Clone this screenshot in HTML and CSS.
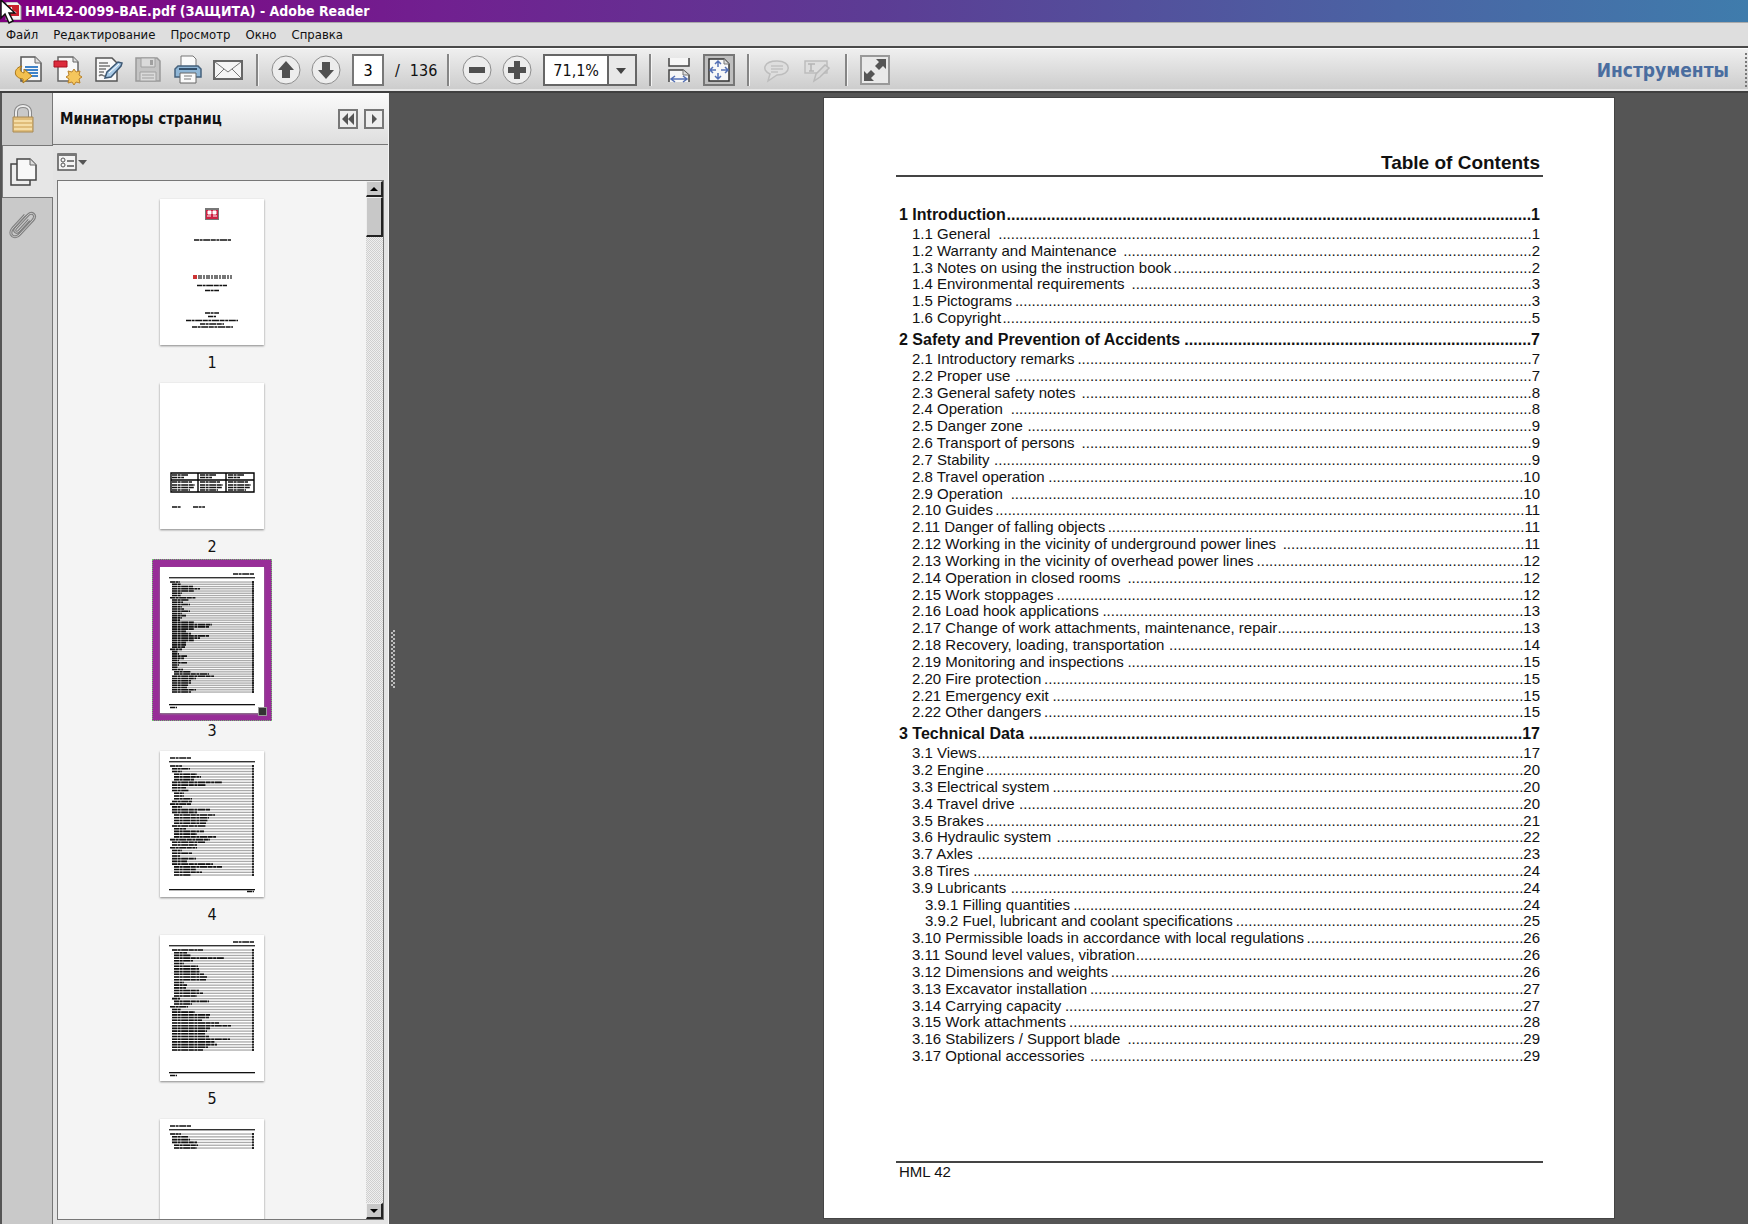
FILE: index.html
```html
<!DOCTYPE html>
<html lang="ru">
<head>
    <meta charset="UTF-8">
    <meta name="viewport" content="width=device-width, initial-scale=1.0">
    <title>HML42-0099-BAE.pdf (ЗАЩИТА) - Adobe Reader</title>
    <link rel="stylesheet" href="styles.css">
</head>
<body>
<header class="titlebar">
    <svg class="app-icon" width="18" height="18" viewBox="0 0 18 18">
        <path d="M2 0h11l4 4v14H2z" fill="#f4f4f4" stroke="#999"/>
        <path d="M0 3h15v11H0z" fill="#c9202b"/>
        <path d="M4 12c3-2 4-5 3-7M4 9c3 0 6 0 8 2" fill="none" stroke="#fff" stroke-width="1.5"/>
    </svg>
    <h1>HML42-0099-BAE.pdf (ЗАЩИТА) - Adobe Reader</h1>
    <svg class="cursor" width="16" height="26" viewBox="0 0 16 26">
        <path d="M1 0v18l4-4 4 9 4-2-4-8h6z" fill="#fff" stroke="#111" stroke-width="1.5"/>
    </svg>
</header>

<nav class="menubar">
    <a href="#">Файл</a>
    <a href="#">Редактирование</a>
    <a href="#">Просмотр</a>
    <a href="#">Окно</a>
    <a href="#">Справка</a>
</nav>

<div class="toolbar">
    <button class="tool" aria-label="Экспорт">
        <svg width="30" height="30" viewBox="0 0 30 30">
            <path d="M8 2h14l6 6v18H8z" fill="#f8f8f8" stroke="#555" stroke-width="1.5"/>
            <path d="M22 2v6h6" fill="#ddd" stroke="#666"/>
            <path d="M12 12h13M12 15h13M12 18h13M15 21h10" stroke="#3f83c8" stroke-width="2"/>
            <path d="M9 11c-9 2-9 12 1 13v4l9-7-8-7v4c-4-1-5-4-2-7z" fill="#f3c04f" stroke="#a87518"/>
        </svg>
    </button>
    <button class="tool" aria-label="Создать PDF">
        <svg width="30" height="30" viewBox="0 0 30 30">
            <path d="M5 2h15l5 5v19H5z" fill="#f8f8f8" stroke="#666" stroke-width="1.5"/>
            <path d="M20 2v5h5" fill="#ddd" stroke="#666"/>
            <path d="M1 6h13v6H1z" fill="#dc2b3c" stroke="#a8101f"/>
            <path d="M21 14l2 3 4-1-1 4 3 2-3 2 1 4-4-1-2 3-2-3-4 1 1-4-3-2 3-2-1-4 4 1z" fill="#f5c65d" stroke="#b9822b"/>
        </svg>
    </button>
    <button class="tool" aria-label="Подписать">
        <svg width="30" height="30" viewBox="0 0 30 30">
            <path d="M3 3h16l5 5v18H3z" fill="#f8f8f8" stroke="#555" stroke-width="1.5"/>
            <path d="M6 8h9M6 11h11M6 14h7M6 17h5M6 21c4-4 4 3 8-1" fill="none" stroke="#777" stroke-width="1.5"/>
            <path d="M12 23l2-6L25 7l4 1-1 3-10 11z" fill="#a9cbe8" stroke="#3d5874" stroke-width="1.5"/>
            <path d="M16 18l10-9" stroke="#fff"/>
        </svg>
    </button>
    <button class="tool" aria-label="Сохранить" disabled>
        <svg width="30" height="30" viewBox="0 0 30 30">
            <path d="M3 3h21l3 3v20H3z" fill="#c4c4c4" stroke="#999" stroke-width="1.5"/>
            <path d="M8 3h14v9H8zM7 17h16v9H7z" fill="#dadada" stroke="#a0a0a0"/>
            <path d="M17 5h3v5h-3z" fill="#a0a0a0"/>
            <path d="M9 20h12M9 23h12" stroke="#a0a0a0"/>
        </svg>
    </button>
    <button class="tool" aria-label="Печать">
        <svg width="30" height="30" viewBox="0 0 30 30">
            <path d="M8 1h12l3 3v9H8z" fill="#fafafa" stroke="#777"/>
            <path d="M2 14l3-3h20l3 3v8H2z" fill="#8fb6d6" stroke="#45617c" stroke-width="1.5"/>
            <path d="M6 14h18" stroke="#33506b" stroke-width="2"/>
            <path d="M7 18h16v10H7z" fill="#fafafa" stroke="#666"/>
            <path d="M11 21h8M11 24h7" stroke="#777"/>
        </svg>
    </button>
    <button class="tool" aria-label="Почта">
        <svg width="32" height="24" viewBox="0 0 32 24">
            <path d="M2 3h28v18H2z" fill="#f5f5f5" stroke="#666" stroke-width="2"/>
            <path d="M3 4l13 10L29 4M3 20l9-9M29 20l-9-9" fill="none" stroke="#777"/>
        </svg>
    </button>
    <span class="sep"></span>
    <button class="tool" aria-label="Предыдущая страница">
        <svg width="30" height="30" viewBox="0 0 30 30">
            <circle cx="15" cy="15" r="14" fill="#ededed" stroke="#8d8d8d"/>
            <path d="M15 6l8 9h-4v8h-8v-8H7z" fill="#505050"/>
        </svg>
    </button>
    <button class="tool" aria-label="Следующая страница">
        <svg width="30" height="30" viewBox="0 0 30 30">
            <circle cx="15" cy="15" r="14" fill="#ededed" stroke="#8d8d8d"/>
            <path d="M15 24l8-9h-4V7h-8v8H7z" fill="#505050"/>
        </svg>
    </button>
    <input class="page-no" type="text" value="3" aria-label="Номер страницы">
    <span class="page-total"><span>/</span><span>136</span></span>
    <span class="sep"></span>
    <button class="tool" aria-label="Уменьшить">
        <svg width="30" height="30" viewBox="0 0 30 30">
            <circle cx="15" cy="15" r="14" fill="#ededed" stroke="#8d8d8d"/>
            <path d="M7 12h16v6H7z" fill="#505050"/>
        </svg>
    </button>
    <button class="tool" aria-label="Увеличить">
        <svg width="30" height="30" viewBox="0 0 30 30">
            <circle cx="15" cy="15" r="14" fill="#ededed" stroke="#8d8d8d"/>
            <path d="M12 6h6v6h6v6h-6v6h-6v-6H6v-6h6z" fill="#505050"/>
        </svg>
    </button>
    <span class="zoom">
        <select aria-label="Масштаб">
            <option>71,1%</option>
            <option>100%</option>
        </select>
        <svg class="zoom-arrow" width="28" height="28" viewBox="0 0 28 28">
            <path d="M1 0v28" stroke="#666" stroke-width="2"/>
            <path d="M9 12h10l-5 6z" fill="#444"/>
        </svg>
    </span>
    <span class="sep"></span>
    <button class="tool" aria-label="По ширине">
        <svg width="26" height="28" viewBox="0 0 26 28">
            <path d="M3 2v8h20V2" fill="#f6f6f6" stroke="#444" stroke-width="1.5"/>
            <path d="M3 26V14h14l6 5v7" fill="#f6f6f6" stroke="#444" stroke-width="1.5"/>
            <path d="M17 14v5h6" fill="#ddd" stroke="#777"/>
            <path d="M6 23h14M9 20l-4 3 4 3M17 20l4 3-4 3" fill="none" stroke="#5470b5" stroke-width="1.5"/>
        </svg>
    </button>
    <button class="tool pressed" aria-label="Страница целиком">
        <svg width="26" height="28" viewBox="0 0 26 28">
            <path d="M3 3h15l5 5v17H3z" fill="#f8f8f8" stroke="#333" stroke-width="1.5"/>
            <path d="M18 3v5h5" fill="#ddd" stroke="#777"/>
            <path d="M12 5v6M12 17v6M5 14h5M15 14h6M9 8l3-3 3 3M9 20l3 3 3-3M7 11l-3 3 3 3M19 11l3 3-3 3" fill="none" stroke="#5470b5" stroke-width="1.5"/>
        </svg>
    </button>
    <span class="sep"></span>
    <button class="tool" aria-label="Комментарий" disabled>
        <svg width="26" height="26" viewBox="0 0 26 26">
            <path d="M13 4c15 0 15 14 0 14l-9 6 2-7C-3 13 0 4 13 4z" fill="#dedede" stroke="#bdbdbd" stroke-width="1.5"/>
            <path d="M7 9h12M7 12h12M7 15h7" stroke="#c2c2c2" stroke-width="1.5"/>
        </svg>
    </button>
    <button class="tool" aria-label="Выделить текст" disabled>
        <svg width="28" height="26" viewBox="0 0 28 26">
            <path d="M2 4h22v12H2z" fill="#dedede" stroke="#bdbdbd" stroke-width="1.5"/>
            <path d="M5 7h7M8 7v7M6 14h5" stroke="#b5b5b5" stroke-width="1.5"/>
            <path d="M11 24l2-7 9-9 4 3-9 9z" fill="#d8d8d8" stroke="#bababa" stroke-width="1.5"/>
        </svg>
    </button>
    <span class="sep"></span>
    <button class="tool" aria-label="Полный экран">
        <svg width="30" height="30" viewBox="0 0 30 30">
            <path d="M1 1h28v28H1z" fill="#e9e9e9" stroke="#999" stroke-width="2"/>
            <path d="M16 4h10v10l-3-3-4 4-4-4 4-4zM4 16l3 3 4-4 4 4-4 4 3 3H4z" fill="#555"/>
        </svg>
    </button>
    <a class="tools-link" href="#">Инструменты</a>
    <span class="grip"></span>
</div>

<main class="workspace">
    <nav class="rail">
        <button class="rail-tab" aria-label="Защита">
            <svg width="24" height="30" viewBox="0 0 24 30">
                <path d="M5 14V8c0-8 14-8 14 0v6" fill="none" stroke="#888" stroke-width="4"/>
                <path d="M5 14V8c0-8 14-8 14 0v6" fill="none" stroke="#ececec" stroke-width="2"/>
                <path d="M2 13h20v15H2z" fill="#e0bd7a" stroke="#a98a55"/>
                <path d="M3 17h18M3 21h18M3 25h18" stroke="#f5dda6" stroke-width="2"/>
            </svg>
        </button>
        <button class="rail-tab active" aria-label="Миниатюры">
            <svg width="30" height="30" viewBox="0 0 30 30">
                <path d="M3 7h19v21H3z" fill="#eee" stroke="#444" stroke-width="1.5"/>
                <path d="M9 2h13l6 6v15H9z" fill="#f8f8f8" stroke="#444" stroke-width="1.5"/>
                <path d="M22 2v6h6" fill="#ddd" stroke="#666"/>
            </svg>
        </button>
        <button class="rail-tab" aria-label="Вложения">
            <svg width="30" height="30" viewBox="0 0 30 30">
                <path d="M21 11L11 22c-3 3-6 0-3-3L20 6c4-4 9 0 5 5L12 25c-5 6-13 1-7-6L17 6" fill="none" stroke="#808080" stroke-width="3"/>
                <path d="M21 11L11 22c-3 3-6 0-3-3L20 6c4-4 9 0 5 5L12 25c-5 6-13 1-7-6L17 6" fill="none" stroke="#c8c8c8"/>
            </svg>
        </button>
    </nav>

    <aside class="panel">
        <div class="panel-head">
            <h2>Миниатюры страниц</h2>
            <button class="small-btn" aria-label="Свернуть">
                <svg width="14" height="12" viewBox="0 0 14 12"><path d="M7 0v12L1 6zM13 0v12L7 6z" fill="#555"/></svg>
            </button>
            <button class="small-btn" aria-label="Развернуть">
                <svg width="14" height="12" viewBox="0 0 14 12"><path d="M5 1v10l5-5z" fill="#555"/></svg>
            </button>
        </div>
        <div class="panel-options">
            <button class="options-btn" aria-label="Параметры">
                <svg width="30" height="20" viewBox="0 0 30 20">
                    <path d="M1 2h18v16H1z" fill="#f4f4f4" stroke="#555" stroke-width="1.5"/>
                    <path d="M1 3h18" stroke="#777" stroke-width="2"/>
                    <circle cx="6" cy="8" r="2" fill="none" stroke="#555"/>
                    <circle cx="6" cy="13" r="2" fill="none" stroke="#555"/>
                    <path d="M10 9h7M10 14h7" stroke="#555" stroke-width="1.5"/>
                    <path d="M21 8h9l-4 5z" fill="#555"/>
                </svg>
            </button>
        </div>
        <div class="thumb-box">
            <div class="thumbs" id="thumbs"></div>
            <div class="scrollbar">
                <button class="scroll-btn" aria-label="Вверх">
                    <svg width="8" height="4" viewBox="0 0 8 4"><path d="M0 4h8L4 0z"/></svg>
                </button>
                <div class="scroll-thumb"></div>
                <button class="scroll-btn last" aria-label="Вниз">
                    <svg width="8" height="4" viewBox="0 0 8 4"><path d="M0 0h8L4 4z"/></svg>
                </button>
            </div>
        </div>
    </aside>

    <div class="splitter"><span class="splitter-grip"></span></div>

    <section class="viewer">
        <article class="paper">
            <h2 class="paper-head">Table of Contents</h2>
            <div class="toc" id="toc"></div>
            <footer class="paper-foot">HML 42</footer>
        </article>
    </section>
</main>

<script src="script.js"></script>
</body>
</html>
```
FILE: styles.css
```css
* {
    box-sizing: border-box;
}

body {
    margin: 0;
    height: 100vh;
    display: flex;
    flex-direction: column;
    overflow: hidden;
    background: #555;
    color: #111;
    font-family: "DejaVu Sans Condensed", "DejaVu Sans", sans-serif;
    font-size: 13px;
}

h1, h2 {
    margin: 0;
}

button {
    padding: 0;
    border: none;
    background: none;
    display: flex;
    align-items: center;
    justify-content: center;
}

a {
    color: inherit;
    text-decoration: none;
}

svg {
    display: block;
}

/* window chrome */
.titlebar {
    position: relative;
    display: flex;
    align-items: center;
    height: 22px;
    padding-left: 4px;
    gap: 3px;
    background: linear-gradient(to right, #800080, #712090 25%, #5c3c94 50%, #4a64a4 80%, #3f7cac);
    color: #fff;
}

.titlebar h1 {
    font-size: 14px;
    line-height: 22px;
}

.cursor {
    position: absolute;
    left: 0;
    top: 0;
}

.menubar {
    display: flex;
    gap: 15px;
    height: 26px;
    padding-left: 6px;
    background: #dedede;
    border-top: 1px solid #aaa;
    border-bottom: 2px solid #4a4a4a;
    line-height: 23px;
}

.toolbar {
    display: flex;
    align-items: center;
    height: 45px;
    padding-left: 8px;
    background: linear-gradient(#efefef, #cbcbcb);
    border-top: 1px solid #fff;
    border-bottom: 2px solid #3f3f3f;
    box-shadow: inset 0 -2px #e6e6e6;
}

.tool {
    width: 40px;
    height: 32px;
    flex: none;
}

.tool.pressed {
    width: 32px;
    margin: 0 4px;
    background: #bfbfbf;
    border: 2px solid #777;
}

.sep {
    width: 2px;
    height: 32px;
    margin: 0 8px;
    background: #858585;
    box-shadow: 1px 0 #f4f4f4;
}

.page-no {
    width: 32px;
    height: 32px;
    margin-left: 6px;
    padding: 0;
    border: 2px solid #777;
    background: #fff;
    text-align: center;
    font: inherit;
    font-size: 16px;
}

.page-total {
    display: flex;
    gap: 10px;
    margin: 0 2px 0 11px;
    font-size: 16px;
}

.zoom {
    position: relative;
    width: 94px;
    height: 32px;
    margin: 0 4px 0 6px;
}

.zoom select {
    width: 100%;
    height: 100%;
    padding: 0 0 0 8px;
    appearance: none;
    border: 2px solid #666;
    border-radius: 0;
    background: #fff;
    color: #111;
    font: inherit;
    font-size: 16px;
}

.zoom-arrow {
    position: absolute;
    top: 2px;
    right: 2px;
    background: #e8e8e8;
    pointer-events: none;
}

.tools-link {
    margin-left: auto;
    color: #4a6d9f;
    font-size: 19px;
    font-weight: bold;
}

.grip {
    height: 34px;
    margin-left: 16px;
    border-left: 2px dotted #777;
    padding-left: 1px;
}

.workspace {
    flex: 1;
    display: flex;
    min-height: 0;
}

/* left navigation */
.rail {
    width: 53px;
    flex: none;
    background: #c9c9c9;
    border-left: 2px solid #555;
    border-right: 1px solid #777;
}

.rail-tab {
    width: 100%;
    height: 52px;
    padding-right: 8px;
}

.rail-tab.active {
    width: 51px;
    height: 53px;
    padding-right: 10px;
    background: #e6e6e6;
    border: 1px solid #777;
    border-right: none;
}

.panel {
    width: 336px;
    flex: none;
    display: flex;
    flex-direction: column;
    padding-bottom: 4px;
    background: #e4e4e4;
    border-right: 1px solid #f4f4f4;
}

.panel-head {
    display: flex;
    align-items: center;
    gap: 6px;
    height: 52px;
    padding: 0 4px 0 7px;
    background: linear-gradient(#fbfbfb, #dedede);
    border-bottom: 1px solid #777;
}

.panel-head h2 {
    flex: 1;
    font-size: 15px;
}

.small-btn {
    width: 20px;
    height: 20px;
    border: 2px solid #777;
    background: #eee;
}

.panel-options {
    display: flex;
    align-items: center;
    height: 35px;
    padding: 0 0 2px 4px;
}

.thumb-box {
    flex: 1;
    display: flex;
    min-height: 0;
    margin: 0 4px;
    border: 1px solid #777;
    background: #f4f4f4;
}

.thumbs {
    flex: 1;
    overflow: hidden;
    padding-top: 10px;
}

.thumb {
    display: flex;
    flex-direction: column;
    align-items: center;
    height: 184px;
    font-size: 16px;
}

.thumb-frame {
    position: relative;
    padding: 8px;
}

.thumb.selected .thumb-frame {
    background: #982d98;
    outline: 1px dotted #6fc46f;
    outline-offset: -1px;
}

.thumb-frame svg {
    background: #fff;
    box-shadow: 0 1px 2px #888;
}

.thumb-handle {
    position: absolute;
    right: 5px;
    bottom: 5px;
    width: 9px;
    height: 9px;
    background: #333;
    border: 1px solid #999;
}

.thumb-label {
    line-height: 20px;
}

.scrollbar {
    width: 17px;
    display: flex;
    flex-direction: column;
    background: repeating-conic-gradient(#cfcfcf 0 25%, #efefef 0 50%) 0 0 / 2px 2px;
}

.scroll-btn, .scroll-thumb {
    width: 17px;
    height: 16px;
    background: #c8c8c8;
    border: 1px solid #eee;
    border-right: 2px solid #222;
    border-bottom: 2px solid #222;
}

.scroll-thumb {
    height: 40px;
}

.scroll-btn.last {
    margin-top: auto;
}

.splitter {
    width: 8px;
    flex: none;
    display: flex;
    align-items: center;
    justify-content: center;
}

.splitter-grip {
    width: 4px;
    height: 58px;
    background: repeating-conic-gradient(#bbb 0 25%, #555 0 50%) 0 0 / 4px 4px;
}

/* document */
.viewer {
    flex: 1;
    display: flex;
    justify-content: flex-end;
    min-width: 0;
    padding: 5px 134px 6px 0;
}

.paper {
    width: 790px;
    display: flex;
    flex-direction: column;
    padding: 53px 71px 35px 72px;
    background: #fff;
    box-shadow: 0 0 0 1px #444;
    color: #111;
    font-family: "Liberation Sans", Arial, sans-serif;
    font-size: 15px;
}

.paper-head {
    padding: 0 3px;
    border-bottom: 2px solid #444;
    text-align: right;
    font-size: 19px;
    line-height: 24px;
}

/* the rows share out the height of the sheet */
.toc {
    flex: 1;
    display: flex;
    flex-direction: column;
    padding: 24px 3px 97px;
}

.toc-row {
    flex: 1 1 0;
    display: flex;
    min-height: 0;
    line-height: 17px;
    white-space: pre;
}

.toc-row.level-1 {
    flex: none;
    margin: 5px 0 1px;
    font-size: 16px;
    font-weight: bold;
    line-height: 18px;
}

.toc-row.level-2 {
    padding-left: 13px;
}

.toc-row.level-3 {
    padding-left: 26px;
}

.leader {
    flex: 1;
    text-align: right;
}

.paper-foot {
    padding: 0 3px 2px;
    border-top: 2px solid #444;
    line-height: 18px;
}
```
FILE: script.js
```js
// a trailing space in the title leaves a gap before the leader dots
const toc = [
    ["1 Introduction", 1],
    ["1.1 General ", 1],
    ["1.2 Warranty and Maintenance ", 2],
    ["1.3 Notes on using the instruction book", 2],
    ["1.4 Environmental requirements ", 3],
    ["1.5 Pictograms", 3],
    ["1.6 Copyright", 5],
    ["2 Safety and Prevention of Accidents", 7],
    ["2.1 Introductory remarks", 7],
    ["2.2 Proper use ", 7],
    ["2.3 General safety notes ", 8],
    ["2.4 Operation ", 8],
    ["2.5 Danger zone ", 9],
    ["2.6 Transport of persons ", 9],
    ["2.7 Stability ", 9],
    ["2.8 Travel operation", 10],
    ["2.9 Operation ", 10],
    ["2.10 Guides", 11],
    ["2.11 Danger of falling objects", 11],
    ["2.12 Working in the vicinity of underground power lines ", 11],
    ["2.13 Working in the vicinity of overhead power lines", 12],
    ["2.14 Operation in closed rooms ", 12],
    ["2.15 Work stoppages", 12],
    ["2.16 Load hook applications", 13],
    ["2.17 Change of work attachments, maintenance, repair", 13],
    ["2.18 Recovery, loading, transportation ", 14],
    ["2.19 Monitoring and inspections", 15],
    ["2.20 Fire protection", 15],
    ["2.21 Emergency exit", 15],
    ["2.22 Other dangers", 15],
    ["3 Technical Data ", 17],
    ["3.1 Views", 17],
    ["3.2 Engine", 20],
    ["3.3 Electrical system", 20],
    ["3.4 Travel drive ", 20],
    ["3.5 Brakes", 21],
    ["3.6 Hydraulic system ", 22],
    ["3.7 Axles ", 23],
    ["3.8 Tires", 24],
    ["3.9 Lubricants ", 24],
    ["3.9.1 Filling quantities", 24],
    ["3.9.2 Fuel, lubricant and coolant specifications", 25],
    ["3.10 Permissible loads in accordance with local regulations", 26],
    ["3.11 Sound level values, vibration", 26],
    ["3.12 Dimensions and weights", 26],
    ["3.13 Excavator installation", 27],
    ["3.14 Carrying capacity", 27],
    ["3.15 Work attachments", 28],
    ["3.16 Stabilizers / Support blade ", 29],
    ["3.17 Optional accessories ", 29]
];

function level(title) {
    return title.split(" ")[0].split(".").length;
}

function addTocRow(title, page) {
    let row = document.createElement("a");
    row.href = "#";
    row.classList.add("toc-row", "level-" + level(title));
    row.innerHTML = "<span>" + title + "</span>"
        + "<span class=\"leader\"></span>"
        + "<span>" + page + "</span>";
    document.getElementById("toc").appendChild(row);
    fillLeader(row.querySelector(".leader"));
}

// as many dots as fit between the title and the page number
function fillLeader(leader) {
    let room = leader.getBoundingClientRect().width;
    let probe = document.createElement("span");
    probe.textContent = ".".repeat(20);
    leader.appendChild(probe);
    let dot = probe.getBoundingClientRect().width / 20;
    leader.textContent = ".".repeat(Math.floor(room / dot));
}

function bar(x, y, w, h, color) {
    return `<rect x="${x}" y="${y}" width="${w}" height="${h}" fill="${color}"/>`;
}

// a strip of tiny words
function words(x, y, w) {
    return `<path d="M${x} ${y}h${w}" stroke="#111" stroke-width="1.6" stroke-dasharray="5 .6 3 .6 7 .6"/>`;
}

// rows: [indent, width] pairs, drawn as shrunken contents lines
function contentsPage(rows, rightSide, last) {
    let s = words(rightSide ? 73 : 10, 7, 21) + bar(9, 10, 86, 1.4, "#333");
    let step = rows.length > 1 ? (last - 15) / (rows.length - 1) : 0;
    rows.forEach(([indent, w], i) => {
        let y = 15 + i * step;
        s += bar(11, y - .6, 82, 1.3, "#aaa");
        s += bar(8, y - 1, indent + 2, 2, "#fff");
        s += words(10 + indent, y, w);
        s += bar(92, y - 1, 2, 2, "#222");
    });
    return s;
}

const footLeft = bar(9, 137, 86, 1.3, "#111") + words(10, 140.5, 7);
const footRight = bar(9, 138, 86, 1.3, "#111") + words(87, 140.5, 7);

const cover = bar(45, 9, 14, 12, "#777") + bar(46, 11, 12, 9, "#cf2243")
    + `<path d="M48 12h3v3h-3zM53 12h3v3h-3zM47 17h4M53 17h4" fill="#fff" stroke="#fff"/>`
    + words(34, 41, 37) + bar(33, 76, 4, 4, "#c33")
    + `<path d="M38 78h34" stroke="#777" stroke-width="4" stroke-dasharray="4 1 2 1"/>`
    + words(37, 86.5, 30) + words(45, 91.5, 14) + words(45, 114, 14)
    + words(48, 117.5, 8) + words(26, 121.5, 52) + words(40, 125, 24) + words(32, 128, 41);

function tablePage() {
    let s = `<path d="M11 90h83v19H11zM11 97h83M38 90v19M66 90v19" fill="none" stroke="#000" stroke-width="1.4"/>`;
    [12, 40, 68].forEach(x => {
        [92, 94.5, 99, 102, 104.5, 107].forEach((y, i) => {
            s += words(x, y, [16, 12, 20, 23, 22, 18][i]);
        });
    });
    return s + words(12, 124, 9) + words(33, 124, 12);
}

const rows3 = toc.map(([t]) => [(level(t) - 1) * 2, Math.round(t.length * .72)]);
const rows4 = [[0, 12], [2, 18], [2, 10], [4, 23], [4, 27], [4, 20], [2, 50], [2, 34], [2, 14], [2, 17], [4, 10], [4, 10], [4, 18], [2, 20], [0, 21],
    [2, 10], [2, 38], [2, 25], [4, 41], [4, 35], [4, 34], [4, 32], [2, 34], [4, 12], [4, 30], [4, 23], [4, 42], [0, 40], [2, 33], [2, 25], [0, 27],
    [2, 10], [2, 20], [2, 8], [2, 24], [2, 15], [2, 41], [4, 48], [4, 22], [4, 28], [4, 17]];
const rows5 = [[2, 31], [4, 13], [4, 17], [4, 50], [4, 19], [4, 10], [4, 24], [4, 25], [4, 26], [4, 30], [4, 33], [4, 32], [4, 10], [4, 13], [4, 12],
    [4, 25], [4, 29], [4, 23], [2, 8], [4, 35], [4, 18], [0, 18], [2, 9], [2, 23], [2, 38], [2, 37], [2, 30], [2, 47], [2, 59], [2, 38], [2, 35],
    [2, 33], [2, 37], [2, 58], [2, 43], [2, 45], [2, 36], [2, 31]];
const rows6 = [[0, 11], [2, 16], [2, 18], [2, 25], [4, 24], [4, 23]];

const thumbs = [
    [cover, 1],
    [tablePage(), 2],
    [contentsPage(rows3, true, 125) + footLeft, 3],
    [contentsPage(rows4, false, 124) + footRight, 4],
    [contentsPage(rows5, true, 115) + footLeft, 5],
    [contentsPage(rows6, false, 29) + footRight, ""]
];

function addThumb([drawing, label]) {
    let v = document.createElement("div");
    v.classList.add("thumb");
    let handle = "";
    if (label === 3) {
        v.classList.add("selected");
        handle = "<span class=\"thumb-handle\"></span>";
    }
    v.innerHTML = `<div class="thumb-frame"><svg width="104" height="146" viewBox="0 0 104 146">${drawing}</svg>${handle}</div>`
        + `<span class="thumb-label">${label}</span>`;
    document.getElementById("thumbs").appendChild(v);
}

toc.forEach(([title, page]) => addTocRow(title, page));
thumbs.forEach(addThumb);
```
